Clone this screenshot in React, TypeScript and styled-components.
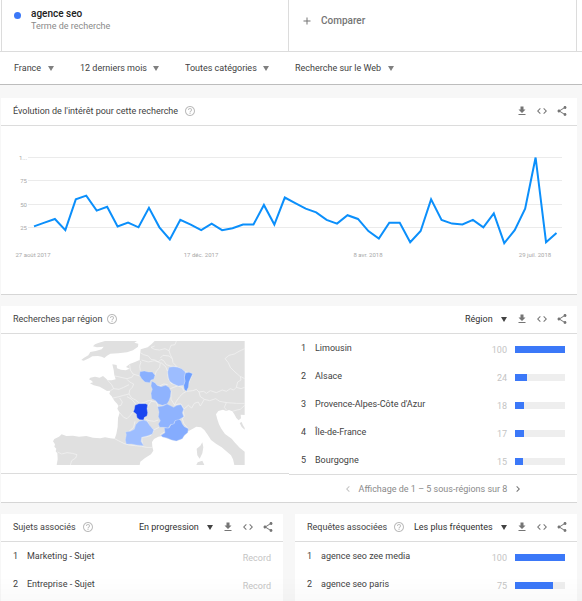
import React from 'react';
import styled, { createGlobalStyle } from 'styled-components';

const GlobalStyle = createGlobalStyle`
  *, *::before, *::after { box-sizing: border-box; }
  body {
    margin: 0;
    background: #f7f7f7;
    color: #424242;
    font-family: Roboto, "Liberation Sans", sans-serif;
    font-size: 9px;
    line-height: 12px;
  }
  button, select { font: inherit; color: inherit; }
`;

const Page = styled.div`
  display: flex;
  flex-direction: column;
  height: 100vh;
  overflow: hidden;
`;

const BottomShade = styled.div`
  position: fixed;
  inset: auto 0 0 0;
  height: 24px;
  pointer-events: none;
  background: linear-gradient(rgba(0, 0, 0, 0), rgba(0, 0, 0, 0.02));
`;

/* ---------- search terms and filters ---------- */

const Terms = styled.header`
  display: grid;
  grid-template-columns: 1fr 1fr;
  flex: none;
  height: 52px;
  padding: 0 5px 0 1px;
  background: #fff;
  border-bottom: 1px solid #dcdcdc;
`;

const TermCell = styled.div`
  display: flex;
  align-items: flex-start;
  gap: 10px;
  padding: 7px 12px;
  border-left: 1px solid #dcdcdc;
  &:last-child {
    margin-left: -1px;
    border-right: 1px solid #dcdcdc;
  }
`;

const Dot = styled.span`
  width: 7px;
  height: 7px;
  margin-top: 5px;
  border-radius: 50%;
  background: #3b78f8;
`;

const TermName = styled.h1`
  margin: 0;
  font-size: 10px;
  line-height: 14px;
  font-weight: 500;
  color: #212121;
`;

const TermKind = styled.p`
  margin: 0;
  line-height: 11px;
  color: #8a8a8a;
`;

const CompareButton = styled.button`
  display: flex;
  align-items: center;
  gap: 8px;
  height: 28px;
  padding: 0;
  border: 0;
  background: none;
  font-size: 10px;
  font-weight: 500;
  color: #757575;
  cursor: pointer;
`;

const Filters = styled.nav`
  display: flex;
  flex: none;
  align-items: center;
  gap: 26px;
  height: 33px;
  padding: 0 14px;
  background: #fff;
  border-bottom: 1px solid #bdbdbd;
`;

const SelectBox = styled.label<{ $strong?: boolean }>`
  display: inline-flex;
  align-items: center;
  gap: ${p => (p.$strong ? 8 : 6)}px;
  color: ${p => (p.$strong ? '#303030' : '#424242')};
  svg { color: ${p => (p.$strong ? '#424242' : '#808080')}; }
`;

const Select = styled.select`
  appearance: none;
  margin: 0;
  padding: 0;
  border: 0;
  background: none;
  line-height: 12px;
  cursor: pointer;
`;

/* ---------- cards ---------- */

const Content = styled.main`
  display: flex;
  flex: 1;
  flex-direction: column;
  gap: 11px;
  padding: 13px 5px 0 1px;
`;

const Card = styled.section<{ $open?: boolean }>`
  flex: none;
  min-width: 0;
  background: #fff;
  border-bottom: ${p => (p.$open ? 0 : 1)}px solid #d6d6d6;
`;

const CardHead = styled.header`
  display: flex;
  align-items: center;
  height: 28px;
  padding: 0 9px 1px 12px;
  border-bottom: 1px solid #dcdcdc;
`;

const CardTitle = styled.h2<{ $gap?: number }>`
  display: flex;
  align-items: center;
  gap: ${p => p.$gap ?? 6}px;
  margin: 0 auto 0 0;
  font-size: 9px;
  font-weight: 400;
  white-space: nowrap;
`;

const Actions = styled.div`
  display: flex;
  gap: 8px;
  margin-left: 9px;
`;

const IconButton = styled.button`
  display: flex;
  padding: 0;
  border: 0;
  background: none;
  color: #757575;
  cursor: pointer;
  &:disabled { color: #c4c4c4; cursor: default; }
`;

const HelpButton = styled(IconButton)`
  color: #bdbdbd;
`;

const Columns = styled.div`
  display: grid;
  grid-template-columns: 1fr 1fr;
  align-items: start;
`;

const MapPanel = styled.div`
  padding: 7px 44px 8px 52px;
  border-bottom: 1px solid #dcdcdc;
  svg { display: block; width: 100%; height: auto; }
`;

const RelatedGrid = styled.div`
  display: grid;
  grid-template-columns: 1fr 1fr;
  flex: 1;
  gap: 12px;
`;

/* ---------- ranked lists ---------- */

const List = styled.ol`
  margin: 0;
  padding: 0;
  list-style: none;
`;

const Row = styled.li`
  display: flex;
  align-items: center;
  height: 28px;
  padding: 0 12px;
`;

const Rank = styled.span`
  width: 14px;
`;

const Label = styled.span`
  flex: 1;
  white-space: nowrap;
`;

const Score = styled.span`
  display: flex;
  align-items: center;
  gap: 8px;
  padding-top: 3px;
  color: #c4c4c4;
`;

const Track = styled.span`
  width: 50px;
  height: 7px;
  background: #eee;
`;

const Bar = styled.span`
  display: block;
  height: 100%;
  background: #3b78f8;
`;

const Pager = styled.footer`
  display: flex;
  align-items: center;
  justify-content: center;
  gap: 5px;
  height: 28px;
  border-top: 1px solid #dcdcdc;
  color: #8a8a8a;
`;

/* ---------- icons ---------- */

const iconPaths = {
  help: 'M11 18h2v-2h-2v2zm1-16C6.48 2 2 6.48 2 12s4.48 10 10 10 10-4.48 10-10S17.52 2 12 2zm0 18c-4.41 0-8-3.59-8-8s3.59-8 8-8 8 3.59 8 8-3.59 8-8 8zm0-14c-2.21 0-4 1.79-4 4h2c0-1.1.9-2 2-2s2 .9 2 2c0 2-3 1.75-3 5h2c0-2.25 3-2.5 3-5 0-2.21-1.79-4-4-4z',
  download: 'M19 9h-4V3H9v6H5l7 7 7-7zM5 18v2h14v-2H5z',
  code: 'M9.4 16.6L4.8 12l4.6-4.6L8 6l-6 6 6 6 1.4-1.4zm5.2 0l4.6-4.6-4.6-4.6L16 6l6 6-6 6-1.4-1.4z',
  share: 'M18 16.08c-.76 0-1.44.3-1.96.77L8.91 12.7c.05-.23.09-.46.09-.7s-.04-.47-.09-.7l7.05-4.11c.54.5 1.25.81 2.04.81 1.66 0 3-1.34 3-3s-1.34-3-3-3-3 1.34-3 3c0 .24.04.47.09.7L8.04 9.81C7.5 9.31 6.79 9 6 9c-1.66 0-3 1.34-3 3s1.34 3 3 3c.79 0 1.5-.31 2.04-.81l7.12 4.16c-.05.21-.08.43-.08.65 0 1.61 1.31 2.92 2.92 2.92s2.92-1.31 2.92-2.92-1.31-2.92-2.92-2.92z',
  add: 'M19 13h-6v6h-2v-6H5v-2h6V5h2v6h6v2z',
  prev: 'M15.41 7.41L14 6l-6 6 6 6 1.41-1.41L10.83 12z',
  next: 'M10 6L8.59 7.41 13.17 12l-4.58 4.59L10 18l6-6z',
};

const Icon = ({ name }: { name: keyof typeof iconPaths }) => (
  <svg width="12" height="12" viewBox="0 0 24 24" fill="currentColor" aria-hidden="true">
    <path d={iconPaths[name]} />
  </svg>
);

const Caret = () => (
  <svg width="6" height="5" viewBox="0 0 6 5" fill="currentColor" aria-hidden="true">
    <path d="M0 0h6L3 5z" />
  </svg>
);

/* ---------- shared parts ---------- */

const Dropdown = ({ value, name, strong }: { value: string; name: string; strong?: boolean }) => (
  <SelectBox $strong={strong}>
    <Select aria-label={name} defaultValue={value}>
      <option>{value}</option>
    </Select>
    <Caret />
  </SelectBox>
);

type HeadProps = { title: string; gap?: number; sort?: string };

const Head = ({ title, gap, sort }: HeadProps) => (
  <CardHead>
    <CardTitle $gap={gap}>
      {title}
      <HelpButton aria-label="Aide"><Icon name="help" /></HelpButton>
    </CardTitle>
    {sort && <Dropdown strong name={title} value={sort} />}
    <Actions>
      <IconButton aria-label="Télécharger"><Icon name="download" /></IconButton>
      <IconButton aria-label="Intégrer"><Icon name="code" /></IconButton>
      <IconButton aria-label="Partager"><Icon name="share" /></IconButton>
    </Actions>
  </CardHead>
);

type Item = { label: string; score: number | string };

const Ranking = ({ items }: { items: Item[] }) => (
  <List>
    {items.map((item, i) => (
      <Row key={item.label}>
        <Rank>{i + 1}</Rank>
        <Label>{item.label}</Label>
        <Score>
          {item.score}
          {typeof item.score === 'number' && (
            <Track><Bar style={{ width: `${item.score}%` }} /></Track>
          )}
        </Score>
      </Row>
    ))}
  </List>
);

/* ---------- interest over time ---------- */

const interest = [
  26, 30, 34, 22, 55, 59, 43, 47, 26, 30, 25, 46, 25, 12, 33, 28, 22,
  29, 22, 24, 28, 28, 49, 28, 57, 51, 45, 41, 33, 29, 38, 34, 21, 13,
  30, 30, 9, 21, 55, 33, 29, 28, 33, 25, 40, 8, 22, 45, 100, 9, 19,
];
const gridLines = [
  { text: '1...', y: 31.5 },
  { text: '75', y: 54.5 },
  { text: '50', y: 78.5 },
  { text: '25', y: 101.5 },
];
const dates = [
  { text: '27 août 2017', x: 32 },
  { text: '17 déc. 2017', x: 200 },
  { text: '8 avr. 2018', x: 367 },
  { text: '29 juil. 2018', x: 534 },
];

const ChartSvg = styled.svg`
  display: block;
  width: 100%;
  height: auto;
  text { font-size: 6px; fill: #a8a8a8; }
`;

const Chart = () => (
  <ChartSvg viewBox="0 0 576 168" role="img" aria-label="Évolution de l'intérêt">
    {gridLines.map(g => (
      <g key={g.text}>
        <path d={`M27 ${g.y}H561`} stroke="#ebebeb" />
        <text x="26" y={g.y + 2.5} textAnchor="end">{g.text}</text>
      </g>
    ))}
    <polyline
      fill="none"
      stroke="#0b8ffb"
      strokeWidth="2"
      points={interest.map((v, i) => `${33 + i * 10.45},${124.6 - v * 0.931}`).join(' ')}
    />
    {dates.map(d => (
      <text key={d.text} x={d.x} y="131" textAnchor="middle">{d.text}</text>
    ))}
  </ChartSvg>
);

/* ---------- map ---------- */

const land = [
  // Great Britain
  'M196 33L178 38L166 43L160 49L172 52L192 50L186 58L168 63L152 66L146 76L132 84L125 90L132 92L148 85L158 79L175 78L186 80L194 84L202 77L212 71L236 70L262 67L280 61L295 50L296 41L284 38L292 33Z',
  // Continent
  'M345 33L336 42L324 52L303 58L301 74L300 90L284 97L270 102L259 111L270 116L258 121L244 119L232 115L231 105L218 103L222 120L224 135L228 148L216 151L204 151L198 145L190 138L180 143L166 140L152 143L148 148L156 152L160 157L151 160L162 166L180 170L192 177L202 183L212 182L209 191L216 199L224 212L233 222L236 228L233 236L240 248L235 264L234 290L230 312L225 326L212 325L196 322L182 325L160 323L140 318L118 320L100 317L80 318L66 313L58 320L44 327L40 334L46 343L44 350L50 356L48 364L53 370L54 388L51 405L300 405L302 395L316 384L334 373L341 362L338 350L337 336L343 327L356 320L370 318L380 325L396 330L410 332L424 328L434 318L446 304L458 297L470 290L484 292L494 300L504 314L514 330L530 342L546 352L560 364L574 376L580 388L584 405L615 405L615 365L600 353L586 338L576 326L556 312L545 296L538 283L533 268L529 253L536 243L550 239L560 243L568 240L578 244L584 253L590 264L597 271L604 265L603 254L615 255L615 33Z',
  // Corsica and Sardinia
  'M488 337L491 352L488 370L480 386L473 376L471 356L482 347Z',
  'M470 405L474 397L488 392L494 405Z',
  // Adriatic islands
  'M600 279L606 276L610 286L615 294L615 299L606 291Z',
];

const borders = [
  // National borders
  'M302 68L312 74L326 78L334 88L346 90L356 96L364 88L372 92L380 104L392 108L410 110L420 114L434 124L446 128L459 131',
  'M345 48L334 52L344 58L360 60L376 56L388 62L394 46L406 44L410 33',
  'M362 84L370 76L388 78L398 86L400 98L410 108',
  'M388 62L392 74L398 86',
  'M459 131L450 152L443 170L440 184L430 190L420 200L410 214L404 226L416 222L424 222L432 236L430 244L434 258L428 266L432 280L446 297',
  'M440 184L460 182L470 178L478 186L492 184L500 190L512 182L530 188L548 180L560 184L572 176L582 180L590 172L604 176L615 172',
  'M432 238L446 226L456 234L464 220L476 216L482 228L494 208L510 212L528 206L540 214L562 218L590 220L615 220',
  'M478 186L482 200L494 208M560 218L554 232L562 242',
  'M615 56L598 64L584 72L568 76L556 86L566 98L572 112L586 126L600 138L615 146',
  'M590 172L594 156L604 150L602 140M578 244L592 240L602 238L615 226',
  'M225 326L236 332L252 340L268 345L288 347L306 349L320 352L338 352',
  'M54 366L66 372L82 368L98 370L112 374L108 384L96 392L92 405',
  // Regional borders
  'M300 92L304 96L300 108L302 122M306 90L326 96L344 92L362 98L360 112L350 124L344 140',
  'M270 104L272 120L280 132L300 138M226 138L244 142L262 146L276 142L282 134',
  'M262 148L270 156L282 162L278 172L270 180L268 192L276 204L288 210L300 220',
  'M204 151L216 164L222 176L212 182M222 176L238 178L252 172L268 164',
  'M220 204L238 200L252 196L268 192M240 204L248 216L244 226L236 228',
  'M240 248L252 262L262 266L272 256L280 246M262 200L276 208L288 222',
  'M344 156L350 166L360 168L372 162L384 164M364 98L378 110L384 124L386 146L394 160L412 166L432 168',
  'M392 176L402 172L414 168L428 172L432 182M394 182L394 208L404 224M300 220L312 218L326 212L338 212',
  'M324 230L334 214L350 216L356 232M318 268L328 272L344 274L356 270M322 272L330 290L342 300L358 292',
  'M342 302L334 316L322 320L306 322L308 346M268 304L282 292L286 274M362 314L374 306',
];

const regions = [
  { name: 'Limousin', fill: '#1a46f0', d: 'M286 226L298 221L318 221L324 224L322 236L324 248L322 258L314 262L312 270L300 269L292 263L290 252L281 245L284 238Z' },
  { name: 'Alsace', fill: '#6f9ffd', d: 'M437 129L448 127L459 131L453 144L448 156L446 172L440 184L434 178L432 166L436 154L434 142Z' },
  { name: 'Provence-Alpes-Côte d’Azur', fill: '#85acfe', d: 'M374 294L388 294L394 284L404 280L406 272L416 266L424 272L428 282L434 290L446 296L444 308L434 316L428 326L410 333L396 330L382 324L368 321L364 316L376 308Z' },
  { name: 'Île-de-France', fill: '#8ab0fe', d: 'M301 125L314 123L326 126L338 126L346 136L342 148L334 150L330 158L316 156L306 146L300 136Z' },
  { name: 'Bourgogne', fill: '#8fb3fe', d: 'M336 154L346 158L352 166L364 170L378 166L388 172L394 184L392 200L388 212L382 222L368 226L356 222L348 212L336 206L334 190L338 178L334 168Z' },
  { name: 'Rhône-Alpes', fill: '#8fb3fe', d: 'M354 230L370 228L382 222L390 226L402 232L412 226L424 224L432 238L428 248L432 260L420 268L406 272L402 282L392 284L386 294L372 292L360 292L356 282L362 272L356 260L358 246Z' },
  { name: 'Lorraine', fill: '#9dbdff', d: 'M388 112L402 110L414 112L426 116L437 126L434 142L436 154L432 166L416 168L402 162L390 154L386 142L384 126Z' },
  { name: 'Midi-Pyrénées', fill: '#9dbdff', d: 'M298 274L312 270L322 274L330 286L342 300L338 312L322 318L306 322L304 334L312 347L290 345L276 342L260 342L257 330L260 314L258 306L272 304L284 298L288 284Z' },
];

const FranceMap = () => (
  <svg viewBox="40 33 576 372" role="img" aria-label="Carte des régions">
    <g fill="#e0e0e0">{land.map(d => <path key={d} d={d} />)}</g>
    <g fill="none" stroke="#f5f5f5" strokeWidth="2" strokeLinejoin="round">
      {borders.map(d => <path key={d} d={d} />)}
    </g>
    {regions.map(r => (
      <path key={r.name} d={r.d} fill={r.fill} stroke="#dbe6fd" strokeWidth="1" />
    ))}
  </svg>
);

/* ---------- page ---------- */

const regionScores: Item[] = [
  { label: 'Limousin', score: 100 },
  { label: 'Alsace', score: 24 },
  { label: "Provence-Alpes-Côte d'Azur", score: 18 },
  { label: 'Île-de-France', score: 17 },
  { label: 'Bourgogne', score: 15 },
];

const topics: Item[] = [
  { label: 'Marketing - Sujet', score: 'Record' },
  { label: 'Entreprise - Sujet', score: 'Record' },
];

const queries: Item[] = [
  { label: 'agence seo zee media', score: 100 },
  { label: 'agence seo paris', score: 75 },
];

export default function App() {
  return (
    <Page>
      <GlobalStyle />
      <Terms>
        <TermCell>
          <Dot />
          <div>
            <TermName>agence seo</TermName>
            <TermKind>Terme de recherche</TermKind>
          </div>
        </TermCell>
        <TermCell>
          <CompareButton><Icon name="add" />Comparer</CompareButton>
        </TermCell>
      </Terms>
      <Filters>
        <Dropdown name="Pays" value="France" />
        <Dropdown name="Période" value="12 derniers mois" />
        <Dropdown name="Catégorie" value="Toutes catégories" />
        <Dropdown name="Type de recherche" value="Recherche sur le Web" />
      </Filters>
      <Content>
        <Card>
          <Head title="Évolution de l'intérêt pour cette recherche" />
          <Chart />
        </Card>
        <Card>
          <Head title="Recherches par région" gap={4} sort="Région" />
          <Columns>
            <MapPanel><FranceMap /></MapPanel>
            <div>
              <Ranking items={regionScores} />
              <Pager>
                <IconButton aria-label="Précédent" disabled><Icon name="prev" /></IconButton>
                Affichage de 1 – 5 sous-régions sur 8
                <IconButton aria-label="Suivant"><Icon name="next" /></IconButton>
              </Pager>
            </div>
          </Columns>
        </Card>
        <RelatedGrid>
          <Card $open>
            <Head title="Sujets associés" sort="En progression" />
            <Ranking items={topics} />
          </Card>
          <Card $open>
            <Head title="Requêtes associées" sort="Les plus fréquentes" />
            <Ranking items={queries} />
          </Card>
        </RelatedGrid>
      </Content>
      <BottomShade />
    </Page>
  );
}
